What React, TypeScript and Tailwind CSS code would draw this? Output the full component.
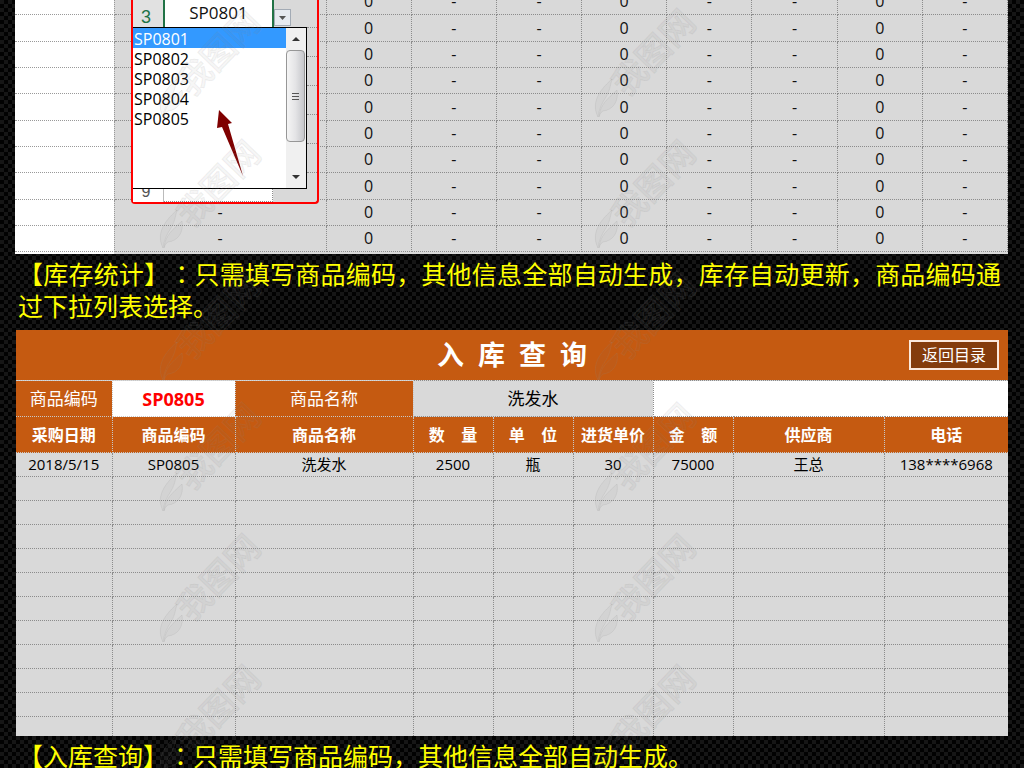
import clsx from "clsx";

const STOCK_ROWS = 10;
// Rows above this index sit behind the open code picker
const FIRST_VISIBLE_ROW = 8;
const STOCK_CELLS = ["-", "0", "-", "-", "0", "-", "-", "0", "-"];
const PRODUCT_CODES = ["SP0801", "SP0802", "SP0803", "SP0804", "SP0805"];

const INBOUND_HEADERS = [
  "采购日期",
  "商品编码",
  "商品名称",
  "数    量",
  "单    位",
  "进货单价",
  "金    额",
  "供应商",
  "电话",
];
const INBOUND_RECORD = [
  "2018/5/15",
  "SP0805",
  "洗发水",
  "2500",
  "瓶",
  "30",
  "75000",
  "王总",
  "138****6968",
];
const EMPTY_ROWS = 11;

const WATERMARK_X = [160, 595];
const WATERMARK_Y = [117, 248, 380, 511, 642, 773, 904];

function Watermarks() {
  return (
    <svg className="pointer-events-none absolute inset-0 z-20 h-full w-full" aria-hidden="true">
      {WATERMARK_Y.map((y) =>
        WATERMARK_X.map((x) => (
          <g
            key={`${x}-${y}`}
            transform={`translate(${x} ${y})`}
            fill="#707070"
            fillOpacity="0.06"
            stroke="#8c8c8c"
            strokeOpacity="0.14"
          >
            <path d="M3 0C-3 -12 1 -24 17 -38C15 -30 15 -27 11 -20C7 -14 4 -8 3 0Z" />
            <path d="M4 0C5 -12 12 -18 22 -27C24 -16 18 -7 8 -6C6 -5 5 -3 4 0Z" />
            <text
              transform="translate(58 -65) rotate(-46)"
              textAnchor="middle"
              dominantBaseline="central"
              fontSize="34"
              className="font-medium"
            >
              我图网
            </text>
          </g>
        ))
      )}
    </svg>
  );
}

function ListScrollbar() {
  return (
    <div className="flex w-5 flex-col bg-[#f0f0f0] pr-px">
      <button type="button" aria-label="向上滚动" className="flex h-[22px] items-center justify-center">
        <svg width="8" height="4" viewBox="0 0 8 4">
          <path d="M0 4L4 0L8 4Z" fill="#333" />
        </svg>
      </button>
      <div className="flex h-[92px] flex-col items-center justify-center gap-[2px] rounded-sm border border-[#979797] bg-linear-to-r from-[#f5f5f5] via-[#e4e4e6] to-[#c6c7cb]">
        <span className="h-px w-[7px] bg-[#555]" />
        <span className="h-px w-[7px] bg-[#555]" />
        <span className="h-px w-[7px] bg-[#555]" />
      </div>
      <div className="flex-1" />
      <button type="button" aria-label="向下滚动" className="flex h-[22px] items-center justify-center">
        <svg width="8" height="4" viewBox="0 0 8 4">
          <path d="M0 0H8L4 4Z" fill="#333" />
        </svg>
      </button>
    </div>
  );
}

function CodePicker() {
  return (
    <div className="absolute top-0 left-[131px] z-10 w-[188px] rounded-b-sm border-2 border-t-0 border-[#f00] bg-[#d9d9d9]">
      {/* Active cell */}
      <div className="flex h-[27px]">
        <div className="flex w-[30px] items-end justify-center bg-[#e1e1e1] pr-1 font-['Liberation_Sans',sans-serif] text-lg leading-5 text-[#217346]">
          3
        </div>
        <div className="flex w-[111px] justify-center border-x-2 border-[#217346] bg-white text-[17px] leading-[26px]">
          SP0801
        </div>
        <button
          type="button"
          aria-label="展开列表"
          className="mt-[9px] flex h-[17px] w-[17px] items-center justify-center border border-[#a3abb5] bg-[#e6eaf0]"
        >
          <svg width="7" height="4" viewBox="0 0 7 4">
            <path d="M0 0H7L3.500 4Z" fill="#555" />
          </svg>
        </button>
      </div>

      {/* Open list */}
      <div className="flex h-[162px]">
        <div className="flex w-[174px] border border-l-0 border-black bg-white">
          <select
            size={5}
            defaultValue="SP0801"
            aria-label="商品编码"
            className="h-full flex-1 appearance-none overflow-hidden text-base leading-5 text-black outline-none"
          >
            {PRODUCT_CODES.map((code) => (
              <option
                key={code}
                value={code}
                className="h-5 min-h-5 p-0 pl-px leading-5 checked:bg-[linear-gradient(#3399ff,#3399ff)] checked:[-webkit-text-fill-color:white]"
              >
                {code}
              </option>
            ))}
          </select>
          <ListScrollbar />
        </div>
        <div className="flex-1 overflow-hidden">
          {[0, 1, 2, 3, 4, 5].map((line) => (
            <div key={line} className="h-[29px] border-t border-dotted border-[#8c8c8c]" />
          ))}
        </div>
      </div>

      <div className="flex h-[13px] overflow-hidden">
        <div className="flex w-[31px] items-end justify-center border-r border-[#bbb] bg-white pr-1 font-['Liberation_Sans',sans-serif] text-base leading-5 text-[#555]">
          9
        </div>
        <div className="w-[109px] border-r border-b border-dotted border-[#8c8c8c] bg-white" />
      </div>

      <svg className="absolute top-[110px] left-[84px]" width="27" height="67" viewBox="0 0 27 67" aria-hidden="true">
        <path d="M2 0L15 13L11 14L26 66L5 17L0 18Z" fill="#7f0000" />
      </svg>
    </div>
  );
}

function StockSheet() {
  return (
    <section className="relative h-[254px] overflow-hidden pr-4 pl-[15px]">
      <table className="-mt-3 w-full table-fixed border-collapse bg-[#d9d9d9] text-center text-base leading-5">
        <colgroup>
          <col className="w-[99px]" />
          <col className="w-[212px]" />
          <col span={8} />
        </colgroup>
        <tbody>
          {Array.from({ length: STOCK_ROWS }, (_, row) => (
            <tr key={row} className={row % 3 === 1 ? "h-[27px]" : "h-[26px]"}>
              <td className="border-r border-b border-dotted border-[#999] bg-white p-0" />
              {STOCK_CELLS.map((value, i) => (
                <td key={i} className="border-r border-b border-dotted border-[#8c8c8c] p-0">
                  {i === 0 && row < FIRST_VISIBLE_ROW ? null : value}
                </td>
              ))}
            </tr>
          ))}
          <tr className="h-1">
            <td className="bg-white p-0" />
            <td colSpan={9} className="p-0" />
          </tr>
        </tbody>
      </table>
      <CodePicker />
    </section>
  );
}

function Caption({ title, children }: { title: string; children: string }) {
  return (
    <p className="pt-1 pr-[23px] pb-2 pl-[18px] text-justify text-[25px] leading-8 text-[#ff0] [text-spacing-trim:space-all]">
      {`【${title}】`}
      <span className="font-['Noto_Sans_CJK_JP',sans-serif] leading-none">：</span>
      {children}
    </p>
  );
}

function InboundSheet() {
  const label = "border border-dotted border-[#c8c8c8] bg-[#c55a11] p-0 text-[17px] font-normal text-white";

  return (
    <section className="mx-4 bg-[#d9d9d9]">
      <header className="relative flex h-[50px] items-center justify-center bg-[#c55a11]">
        <h2 className="text-[27px] leading-8 font-bold whitespace-pre text-white">入  库  查  询</h2>
        <button
          type="button"
          className="absolute right-[9px] h-[30px] w-[90px] border-2 border-[#fbe9dd] bg-[#843c0c] text-base leading-5 text-white"
        >
          返回目录
        </button>
      </header>
      <table className="w-full table-fixed border-collapse text-center leading-5 text-black">
        <colgroup>
          <col className="w-24" />
          <col className="w-[123px]" />
          <col className="w-[178px]" />
          <col className="w-20" />
          <col className="w-20" />
          <col className="w-20" />
          <col className="w-20" />
          <col className="w-[151px]" />
          <col />
        </colgroup>
        <thead>
          <tr className="h-9">
            <th className={clsx(label, "border-l-0")}>商品编码</th>
            <td className="border border-dotted border-[#c8c8c8] bg-white p-0 text-lg leading-5 font-bold text-[#f00]">
              SP0805
            </td>
            <th className={label}>商品名称</th>
            <td colSpan={3} className="border border-dotted border-[#8c8c8c] p-0 text-[17px]">
              洗发水
            </td>
            <td colSpan={3} className="border-t border-b border-dotted border-[#8c8c8c] bg-white p-0" />
          </tr>
          <tr className="h-9">
            {INBOUND_HEADERS.map((header) => (
              <th
                key={header}
                className="border border-dotted border-[#c8c8c8] bg-[#c55a11] p-0 text-base leading-5 font-bold whitespace-pre text-white first:border-l-0 last:border-r-0"
              >
                {header}
              </th>
            ))}
          </tr>
        </thead>
        <tbody className="text-[15px]">
          <tr className="h-6">
            {INBOUND_RECORD.map((value) => (
              <td
                key={value}
                className="border border-dotted border-[#8c8c8c] p-0 pb-0.5 leading-5 first:border-l-0 last:border-r-0"
              >
                {value}
              </td>
            ))}
          </tr>
          {Array.from({ length: EMPTY_ROWS }, (_, row) => (
            <tr key={row} className={row === EMPTY_ROWS - 1 ? "h-[19px]" : "h-6"}>
              {INBOUND_HEADERS.map((header) => (
                <td
                  key={header}
                  className={clsx(
                    "border border-dotted border-[#8c8c8c] p-0 first:border-l-0 last:border-r-0",
                    row === EMPTY_ROWS - 1 && "border-b-0"
                  )}
                />
              ))}
            </tr>
          ))}
        </tbody>
      </table>
    </section>
  );
}

export default function App() {
  return (
    <main className="relative h-screen overflow-hidden bg-black bg-[repeating-conic-gradient(#020202_0_25%,#161616_0_50%)] bg-[length:8px_8px] font-['Open_Sans','Noto_Sans_CJK_SC',sans-serif] text-[#111]">
      <StockSheet />
      <Caption title="库存统计">
        只需填写商品编码，其他信息全部自动生成，库存自动更新，商品编码通过下拉列表选择。
      </Caption>
      <InboundSheet />
      <Caption title="入库查询">只需填写商品编码，其他信息全部自动生成。</Caption>
      <Watermarks />
    </main>
  );
}
